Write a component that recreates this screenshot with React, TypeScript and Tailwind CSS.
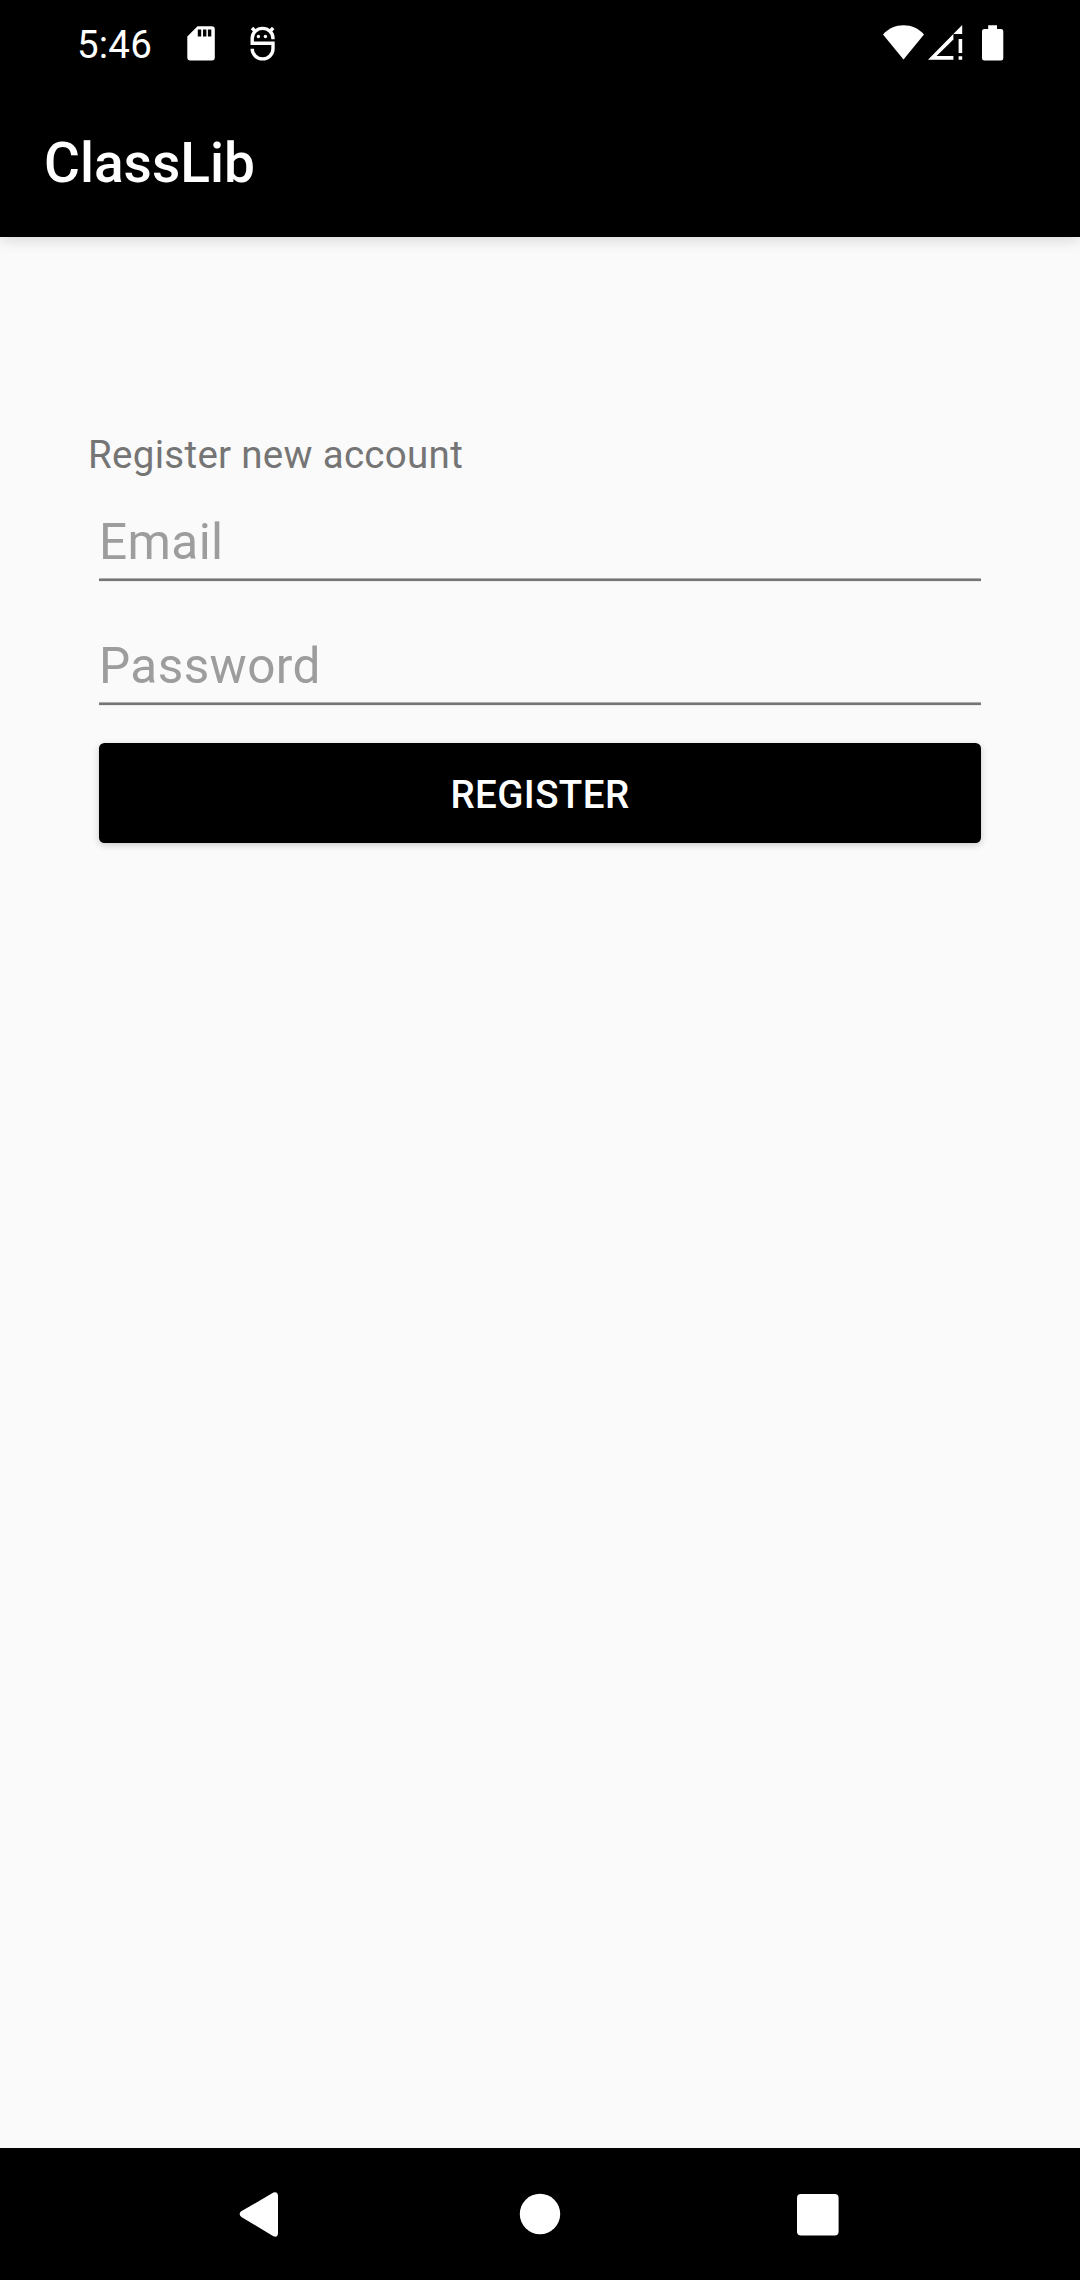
import type { ReactNode } from 'react'

interface FieldProps {
  type: string
  label: string
}

function SdCardIcon() {
  return (
    <svg className="w-[28px] h-[35px]" viewBox="0 0 28 35" fill="white">
      <path
        fillRule="evenodd"
        d="M10.5 0.3H24.8a3 3 0 0 1 3 3V31.6a3 3 0 0 1-3 3H3.3a3 3 0 0 1-3-3V10.5ZM10.8 3.6V10.6H14.2V3.6ZM16 3.6V10.6H19.4V3.6ZM20.9 3.6V10.6H24.3V3.6Z"
      />
    </svg>
  )
}

function MascotIcon() {
  return (
    <svg className="w-[30px] h-[38px]" viewBox="0 0 30 38" fill="none" stroke="white" strokeWidth={3.4}>
      <path d="M25 15.2V14.4A10.4 10 0 0 0 4.2 14.4V19.3H25V24.7A10.4 10.2 0 0 1 4.2 24.7" />
      <path d="M4 4L7.5 7.5M25.2 4L21.7 7.5" />
      <g fill="white" stroke="none">
        <circle cx="10.4" cy="12.5" r="1.7" />
        <circle cx="17.4" cy="12.5" r="1.7" />
      </g>
    </svg>
  )
}

function WifiIcon() {
  return (
    <svg className="w-[42px] h-[36px]" viewBox="0 0 42 36" fill="white">
      <path d="M20.5 34.6L0 9.6C5.6 3 12.6 0.2 20.5 0.2S35.4 3 41 9.6Z" />
    </svg>
  )
}

function SignalIcon() {
  return (
    <svg className="w-[35px] h-[36px]" viewBox="0 0 35 36" fill="white">
      <path fillRule="evenodd" d="M34.2 0V9H25.4V34.8H0ZM25.4 14.4L8.6 31H25.4Z" />
      <path d="M30.6 14H34.2V28H30.6ZM30.6 31.2H34.2V34.8H30.6Z" />
    </svg>
  )
}

function BatteryIcon() {
  return (
    <svg className="w-[22px] h-[36px]" viewBox="0 0 22 36" fill="white">
      <path d="M6.2 0.3H15V4H19a2.3 2.3 0 0 1 2.3 2.3V33.2a2.3 2.3 0 0 1-2.3 2.3H2.3A2.3 2.3 0 0 1 0 33.2V6.3A2.3 2.3 0 0 1 2.3 4H6.2Z" />
    </svg>
  )
}

function StatusBar() {
  return (
    <div className="flex justify-between h-[83px] pl-[77px] pr-[76px]">
      <div className="flex items-start pt-6">
        <span className="w-[110px] -mt-[2px] text-[38.5px] leading-[46px] tracking-[0.2px]">5:46</span>
        <div className="pt-[2px]">
          <SdCardIcon />
        </div>
        <div className="ml-[33px]">
          <MascotIcon />
        </div>
      </div>
      <div className="flex items-start pt-[25px]">
        <WifiIcon />
        <div className="ml-[3px]">
          <SignalIcon />
        </div>
        <div className="ml-[19px]">
          <BatteryIcon />
        </div>
      </div>
    </div>
  )
}

function Field({ type, label }: FieldProps) {
  return (
    <div className="flex flex-col">
      <input
        type={type}
        placeholder={label}
        aria-label={label}
        className="h-[72px] w-full bg-transparent text-[49.5px] tracking-[0.4px] text-black outline-none placeholder:text-[#9d9d9d] placeholder:opacity-100"
      />
      {/* 1dp underline */}
      <div className="h-1 bg-[linear-gradient(#adadad_25%,#757575_25%,#757575_75%,#ececec_75%)]" />
    </div>
  )
}

function NavButton({ label, children }: { label: string; children: ReactNode }) {
  return (
    <button aria-label={label} className="flex justify-center w-[278px] pt-11">
      <svg className="w-[46px] h-[46px]" viewBox="0 0 46 46" fill="white">
        {children}
      </svg>
    </button>
  )
}

export default function App() {
  return (
    <div className="flex flex-col w-[1080px] h-[2280px] bg-[#fafafa] font-[Roboto,sans-serif] overflow-hidden">
      <header className="h-[237px] shrink-0 bg-black text-white shadow-[0_3px_14px_rgba(0,0,0,0.14)]">
        <StatusBar />
        <div className="flex items-center h-[154px] pl-11 pt-[6px]">
          <h1 className="text-[55px] leading-[64px] font-medium">ClassLib</h1>
        </div>
      </header>

      <main className="flex-1 px-[88px] pt-[195px]">
        <p className="h-[46px] text-[38.5px] leading-[46px] tracking-[0.3px] text-[#757575]">Register new account</p>
        <form className="flex flex-col px-[11px] pt-7" onSubmit={(e) => e.preventDefault()}>
          <Field type="email" label="Email" />
          <div className="pt-12">
            <Field type="password" label="Password" />
          </div>
          <button
            type="submit"
            className="mt-[37px] h-[100px] pt-[3px] rounded-[5.5px] bg-black text-white text-[38.5px] leading-[46px] tracking-[0.4px] font-medium uppercase shadow-[0_2px_7px_rgba(0,0,0,0.2)]"
          >
            Register
          </button>
        </form>
      </main>

      <nav className="flex justify-center h-[132px] shrink-0 bg-black">
        <NavButton label="Back">
          <path d="M1.8 19.6L34.4 0.6Q38.8-0.8 39 4V41Q38.8 46 34.4 44.2L2.4 25Q-0.8 22.2 1.8 19.6Z" />
        </NavButton>
        <NavButton label="Home">
          <circle cx="23" cy="22" r="20.2" />
        </NavButton>
        <NavButton label="Recents">
          <rect x="2" y="2" width="41.6" height="41.6" rx="4" />
        </NavButton>
      </nav>
    </div>
  )
}
